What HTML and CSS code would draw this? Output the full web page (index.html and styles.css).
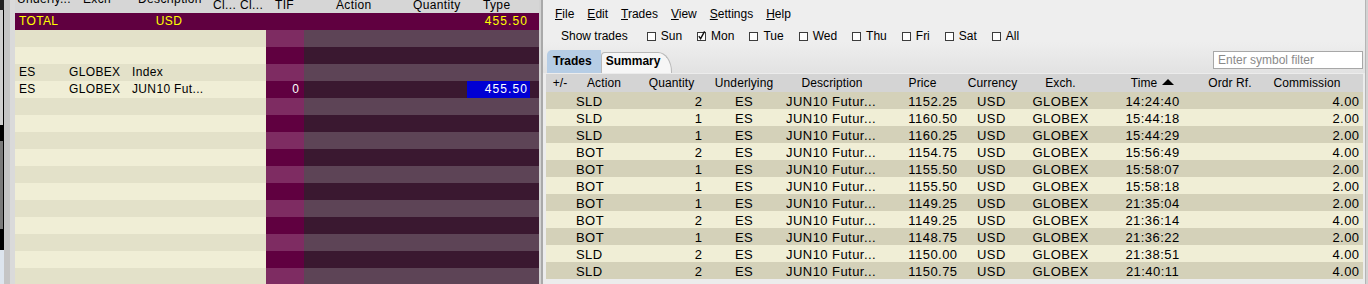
FILE: index.html
```html
<!DOCTYPE html>
<html>
<head>
<meta charset="utf-8">
<title>Trades</title>
<link rel="stylesheet" href="styles.css">
</head>
<body>
<div class="app">
  <div class="edge">
    <div class="e e1"></div><div class="e e2"></div><div class="e e3"></div><div class="e e4"></div><div class="e e5"></div><div class="e e6"></div>
  </div>
  <div class="gutter"></div>

  <div class="lpanel">
    <div class="lhead lgrid">
      <div class="h-und"><span class="up">Underly...</span></div>
      <div class="h-exch"><span class="up">Exch</span></div>
      <div class="h-desc"><span class="up">Description</span></div>
      <div class="h-cl1">Cl...</div>
      <div class="h-cl2">Cl...</div>
      <div class="h-tif">TIF</div>
      <div class="h-act">Action</div>
      <div class="h-qty">Quantity</div>
      <div class="h-type">Type</div>
    </div>
    <div class="ltotal lgrid">
      <div class="lc">TOTAL</div><div></div><div class="lc ctr">USD</div><div></div><div></div><div></div><div></div><div></div><div class="lc num rt">455.50</div>
    </div>
    <div class="lrow odd"></div>
    <div class="lrow even"></div>
    <div class="lrow odd lgrid">
      <div class="lc">ES</div><div class="lc">GLOBEX</div><div class="lc">Index</div><div></div><div></div><div></div><div></div><div></div><div></div>
    </div>
    <div class="lrow even lgrid">
      <div class="lc">ES</div><div class="lc">GLOBEX</div><div class="lc">JUN10 Fut...</div><div></div><div></div><div class="lc num tifv">0</div><div></div><div></div><div class="type"><span class="sel num">455.50</span></div>
    </div>
    <div class="lrow odd"></div>
    <div class="lrow even"></div>
    <div class="lrow odd"></div>
    <div class="lrow even"></div>
    <div class="lrow odd"></div>
    <div class="lrow even"></div>
    <div class="lrow odd"></div>
    <div class="lrow even"></div>
    <div class="lrow odd"></div>
    <div class="lrow even"></div>
    <div class="lrow odd"></div>
  </div>

  <div class="divider"></div>

  <div class="rpanel">
    <div class="menubar">
      <span><u>F</u>ile</span><span><u>E</u>dit</span><span><u>T</u>rades</span><span><u>V</u>iew</span><span><u>S</u>ettings</span><span><u>H</u>elp</span>
    </div>
    <div class="showbar">
      <span class="showlbl">Show trades</span>
      <span class="chk"><svg width="9" height="9" viewBox="0 0 9 9"><rect x="0.5" y="0.5" width="8" height="8" fill="#fff" stroke="#3c3c3c"/></svg>Sun</span>
      <span class="chk"><svg width="9" height="9" viewBox="0 0 9 9" overflow="visible"><rect x="0.5" y="0.5" width="8" height="8" fill="#fff" stroke="#3c3c3c"/><path d="M1.8 4.2 L3.6 6.6 L7.6 -0.6" fill="none" stroke="#111" stroke-width="1.4"/></svg>Mon</span>
      <span class="chk"><svg width="9" height="9" viewBox="0 0 9 9"><rect x="0.5" y="0.5" width="8" height="8" fill="#fff" stroke="#3c3c3c"/></svg>Tue</span>
      <span class="chk"><svg width="9" height="9" viewBox="0 0 9 9"><rect x="0.5" y="0.5" width="8" height="8" fill="#fff" stroke="#3c3c3c"/></svg>Wed</span>
      <span class="chk"><svg width="9" height="9" viewBox="0 0 9 9"><rect x="0.5" y="0.5" width="8" height="8" fill="#fff" stroke="#3c3c3c"/></svg>Thu</span>
      <span class="chk"><svg width="9" height="9" viewBox="0 0 9 9"><rect x="0.5" y="0.5" width="8" height="8" fill="#fff" stroke="#3c3c3c"/></svg>Fri</span>
      <span class="chk"><svg width="9" height="9" viewBox="0 0 9 9"><rect x="0.5" y="0.5" width="8" height="8" fill="#fff" stroke="#3c3c3c"/></svg>Sat</span>
      <span class="chk"><svg width="9" height="9" viewBox="0 0 9 9"><rect x="0.5" y="0.5" width="8" height="8" fill="#fff" stroke="#3c3c3c"/></svg>All</span>
    </div>
    <div class="tabrow">
      <div class="tab on">Trades</div>
      <div class="tab off">Summary</div>
      <input class="filter" type="text" placeholder="Enter symbol filter">
    </div>
    <div class="rtable">
      <div class="thead rgrid">
        <div>+/-</div><div>Action</div><div>Quantity</div><div>Underlying</div><div>Description</div><div>Price</div><div>Currency</div><div>Exch.</div><div class="sort">Time<svg width="12" height="6" viewBox="0 0 12 6"><polygon points="0,6 6,0 12,6" fill="#000"/></svg></div><div>Ordr Rf.</div><div>Commission</div>
      </div>
      <div class="trow dk rgrid"><div></div><div class="act">SLD</div><div class="qty">2</div><div class="ctr">ES</div><div class="desc">JUN10 Futur...</div><div class="price">1152.25</div><div class="cur">USD</div><div class="ctr">GLOBEX</div><div class="ctr">14:24:40</div><div></div><div class="comm">4.00</div></div>
      <div class="trow lt rgrid"><div></div><div class="act">SLD</div><div class="qty">1</div><div class="ctr">ES</div><div class="desc">JUN10 Futur...</div><div class="price">1160.50</div><div class="cur">USD</div><div class="ctr">GLOBEX</div><div class="ctr">15:44:18</div><div></div><div class="comm">2.00</div></div>
      <div class="trow dk rgrid"><div></div><div class="act">SLD</div><div class="qty">1</div><div class="ctr">ES</div><div class="desc">JUN10 Futur...</div><div class="price">1160.25</div><div class="cur">USD</div><div class="ctr">GLOBEX</div><div class="ctr">15:44:29</div><div></div><div class="comm">2.00</div></div>
      <div class="trow lt rgrid"><div></div><div class="act">BOT</div><div class="qty">2</div><div class="ctr">ES</div><div class="desc">JUN10 Futur...</div><div class="price">1154.75</div><div class="cur">USD</div><div class="ctr">GLOBEX</div><div class="ctr">15:56:49</div><div></div><div class="comm">4.00</div></div>
      <div class="trow dk rgrid"><div></div><div class="act">BOT</div><div class="qty">1</div><div class="ctr">ES</div><div class="desc">JUN10 Futur...</div><div class="price">1155.50</div><div class="cur">USD</div><div class="ctr">GLOBEX</div><div class="ctr">15:58:07</div><div></div><div class="comm">2.00</div></div>
      <div class="trow lt rgrid"><div></div><div class="act">BOT</div><div class="qty">1</div><div class="ctr">ES</div><div class="desc">JUN10 Futur...</div><div class="price">1155.50</div><div class="cur">USD</div><div class="ctr">GLOBEX</div><div class="ctr">15:58:18</div><div></div><div class="comm">2.00</div></div>
      <div class="trow dk rgrid"><div></div><div class="act">BOT</div><div class="qty">1</div><div class="ctr">ES</div><div class="desc">JUN10 Futur...</div><div class="price">1149.25</div><div class="cur">USD</div><div class="ctr">GLOBEX</div><div class="ctr">21:35:04</div><div></div><div class="comm">2.00</div></div>
      <div class="trow lt rgrid"><div></div><div class="act">BOT</div><div class="qty">2</div><div class="ctr">ES</div><div class="desc">JUN10 Futur...</div><div class="price">1149.25</div><div class="cur">USD</div><div class="ctr">GLOBEX</div><div class="ctr">21:36:14</div><div></div><div class="comm">4.00</div></div>
      <div class="trow dk rgrid"><div></div><div class="act">BOT</div><div class="qty">1</div><div class="ctr">ES</div><div class="desc">JUN10 Futur...</div><div class="price">1148.75</div><div class="cur">USD</div><div class="ctr">GLOBEX</div><div class="ctr">21:36:22</div><div></div><div class="comm">2.00</div></div>
      <div class="trow lt rgrid"><div></div><div class="act">SLD</div><div class="qty">2</div><div class="ctr">ES</div><div class="desc">JUN10 Futur...</div><div class="price">1150.00</div><div class="cur">USD</div><div class="ctr">GLOBEX</div><div class="ctr">21:38:51</div><div></div><div class="comm">4.00</div></div>
      <div class="trow dk rgrid"><div></div><div class="act">SLD</div><div class="qty">2</div><div class="ctr">ES</div><div class="desc">JUN10 Futur...</div><div class="price">1150.75</div><div class="cur">USD</div><div class="ctr">GLOBEX</div><div class="ctr">21:40:11</div><div></div><div class="comm">4.00</div></div>
    </div>
  </div>

  <div class="rborder"></div>
</div>
</body>
</html>
```

FILE: styles.css
```css
* { box-sizing: border-box; margin: 0; padding: 0; }
html, body { width: 1368px; height: 284px; overflow: hidden; }
body { font-family: "Liberation Sans", Arial, sans-serif; color: #000; background: #d6d6d6; }
.app { display: flex; width: 1368px; height: 284px; }

/* far-left edge of neighbouring window */
.edge { width: 4px; flex: none; display: flex; flex-direction: column; }
.e { flex: none; }
.e1 { height: 10px; background: #202020; }
.e2 { height: 115px; background: #cfcfcf; border-right: 1px solid #000; }
.e3 { height: 15px; background: #000; }
.e4 { height: 90px; background: #7a7a7a; border: 1px solid #000; border-left: none; }
.e5 { height: 20px; background: #000; }
.e6 { height: 34px; background: #dde5ee; }

.gutter { width: 11px; flex: none; background: #dadada; border-left: 6px solid #c5c5c5; }

/* left order panel */
.lpanel { width: 524px; flex: none; display: flex; flex-direction: column; overflow: hidden; font-size: 12px; letter-spacing: 0.35px; }
.lgrid { display: grid; grid-template-columns: 50px 63px 82px 28px 28px 38px 78px 78px 79px; }
.lhead { height: 13px; flex: none; background: #d6d6d6; overflow: hidden; line-height: 11px; white-space: nowrap; }
.lhead > div { overflow: visible; }
.up { display: block; margin-top: -6px; }
.h-und { padding-left: 2px; }
.h-exch { padding-left: 18px; }
.h-desc { padding-left: 10px; }
.h-cl1 { padding-left: 3px; }
.h-cl2 { padding-left: 2px; }
.h-tif { padding-left: 9px; }
.h-act { padding-left: 32px; }
.h-qty { padding-left: 31px; }
.h-type { padding-left: 23px; }

.ltotal { height: 17px; flex: none; line-height: 17px; background: #600040; color: #ffff00; }
.lrow { height: 17px; flex: none; line-height: 17px; }
.lrow.odd { background: linear-gradient(to right, #e3e1c9 0 251px, #7e2c62 251px 289px, #5d4456 289px); }
.lrow.even { background: linear-gradient(to right, #f0eed6 0 251px, #600040 251px 289px, #3a1830 289px); }
.lc { padding-left: 4px; white-space: nowrap; overflow: hidden; }
.lc.ctr { text-align: center; padding-left: 0; }
.num { letter-spacing: 1.1px; }
.lc.rt { text-align: right; padding-right: 11px; padding-left: 0; }
.lc.tifv { color: #fff; text-align: right; padding-right: 4px; padding-left: 0; }
.type { padding-left: 7px; }
.sel { display: block; width: 63px; background: #0000d4; color: #fff; text-align: right; padding-right: 2px; }

.divider { width: 4px; flex: none; background: linear-gradient(to right, #d2d2d2 0 2px, #a9a9a9 2px); }

/* right trades panel */
.rpanel { width: 822px; flex: none; padding: 0 2px 0 3px; display: flex; flex-direction: column;
  background: linear-gradient(#eeeeee 0, #eeeeee 42px, #e2e2e2 73px, #ececec 73px); }
.rborder { width: 3px; flex: none; background: linear-gradient(to right, #b5b5b5 0 1px, #d2d2d2 1px); }

.menubar { height: 29px; flex: none; line-height: 29px; font-size: 12px; padding-left: 9px; display: flex; gap: 13px; }
.menubar u { text-decoration: underline; text-underline-offset: 1px; }
.showbar { height: 14px; flex: none; display: flex; align-items: center; font-size: 12px; padding-left: 15px; white-space: nowrap; }
.showlbl { margin-right: 19px; }
.chk { display: flex; align-items: center; gap: 5px; margin-right: 15px; }
.chk svg { display: block; }

.tabrow { height: 23px; flex: none; margin-top: 7px; margin-bottom: 1px; display: flex; align-items: flex-start; padding-left: 1px; }
.tab { height: 23px; line-height: 23px; font-size: 12px; font-weight: bold; white-space: nowrap; }
.tab.on { background: #b6cde5; border-radius: 5px 0 0 0; padding: 0 9px 0 6px; }
.tab.off { height: 21px; margin-top: 2px; line-height: 17px; background: #f6f6f6; border: 1px solid #b8b8b8; border-bottom: none;
  border-radius: 4px 14px 0 0 / 4px 20px 0 0; padding: 0 11px 0 4px; }
.filter { margin-left: auto; width: 150px; height: 18px; margin-top: 1px; border: 1px solid #a7a7a7; background: #fff;
  font: 12px "Liberation Sans", Arial, sans-serif; padding: 0 0 0 4px; outline: none; }
.filter::placeholder { color: #8a8a8a; }

.rtable { display: flex; flex-direction: column; }
.rgrid { display: grid; grid-template-columns: 28px 60px 75px 70px 106px 75px 65px 71px 113px 42px 112px; }
.thead { height: 18px; line-height: 18px; background: #d4d4d4; font-size: 12px; letter-spacing: 0.1px; }
.thead > div { display: flex; justify-content: center; white-space: nowrap; overflow: visible; }
.thead .sort { align-items: center; gap: 5px; }
.thead .sort svg { display: block; margin-bottom: 3px; }
.trow { height: 17px; padding-top: 2px; line-height: 15px; font-size: 13px; letter-spacing: 0.45px; }
.trow > div { white-space: nowrap; overflow: hidden; }
.trow.dk { background: #d4d1b9; }
.trow.lt { background: #f0eed6; }
.ctr { text-align: center; }
.act { padding-left: 2px; }
.qty { text-align: right; padding-right: 6.5px; }
.desc { padding-left: 7px; }
.price { text-align: right; padding-right: 2.5px; }
.cur { padding-left: 17px; }
.comm { text-align: right; padding-right: 3.5px; }
```
